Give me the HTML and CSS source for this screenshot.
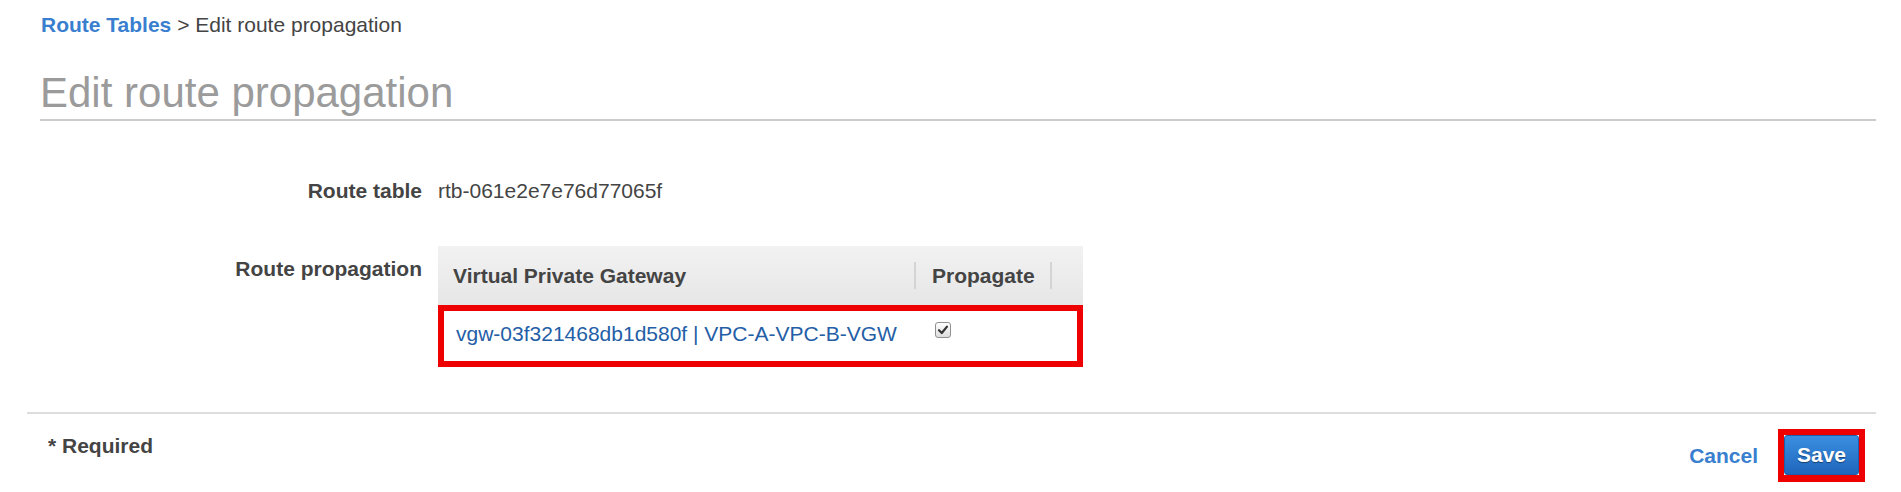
FILE: index.html
```html
<!DOCTYPE html>
<html lang="en">
<head>
<meta charset="utf-8">
<title>Edit route propagation</title>
<link rel="stylesheet" href="styles.css">
</head>
<body>
<div class="top">
  <div class="breadcrumb"><a class="crumb-link" href="#">Route Tables</a> &gt; Edit route propagation</div>
  <h1 class="title">Edit route propagation</h1>
</div>

<div class="form">
  <div class="label label-first">Route table</div>
  <div class="value value-first">rtb-061e2e7e76d77065f</div>

  <div class="label label-second">Route propagation</div>
  <div class="table">
    <div class="thead">
      <div class="th th-gw">Virtual Private Gateway</div>
      <div class="th th-prop">Propagate</div>
      <div class="th th-rest"></div>
    </div>
    <div class="trow">
      <div class="td td-gw"><a class="gw-link" href="#">vgw-03f321468db1d580f | VPC-A-VPC-B-VGW</a></div>
      <div class="td td-prop">
        <span class="checkbox">
          <svg width="12" height="12" viewBox="0 0 12 12"><path d="M2 6.2 L4.8 9 L10 2.6" fill="none" stroke="#333" stroke-width="2.2" stroke-linecap="round" stroke-linejoin="round"/></svg>
        </span>
      </div>
    </div>
  </div>
</div>

<div class="footer">
  <div class="required">* Required</div>
  <div class="actions">
    <a class="cancel" href="#">Cancel</a>
    <span class="highlight"><button class="save" type="button">Save</button></span>
  </div>
</div>
</body>
</html>
```

FILE: styles.css
```css
html, body {
  margin: 0;
  padding: 0;
  background: #fff;
}

body {
  font-family: "Liberation Sans", Arial, sans-serif;
  font-size: 21px;
  line-height: 24px;
  color: #444;
}

a {
  text-decoration: none;
}

.top {
  padding: 13px 25px 0 40px;
}

.breadcrumb {
  margin-left: 1px;
  color: #444;
}

.crumb-link {
  color: #3a7fcf;
  font-weight: bold;
}

.title {
  margin: 32px 0 0 0;
  padding: 0 0 2px 0;
  font-size: 42px;
  line-height: 48px;
  font-weight: normal;
  color: #9b9b9b;
  border-bottom: 2px solid #cccccc;
}

.form {
  display: grid;
  grid-template-columns: 422px auto;
  column-gap: 16px;
  row-gap: 43px;
  margin-top: 58px;
  align-items: start;
}

.label {
  text-align: right;
  font-weight: bold;
  color: #444;
}

.label-second {
  margin-top: 11px;
}

.value {
  color: #444;
}

.table {
  width: 645px;
}

.thead {
  display: flex;
  align-items: center;
  height: 59px;
  background: linear-gradient(#f2f2f2, #e6e6e6);
}

.th {
  font-weight: bold;
  color: #444;
  height: 27px;
  line-height: 27px;
  box-sizing: border-box;
}

.th-gw {
  width: 478px;
  padding-left: 15px;
  border-right: 2px solid #d4d4d4;
}

.th-prop {
  width: 136px;
  padding-left: 16px;
  border-right: 2px solid #d4d4d4;
}

.th-rest {
  flex: 1;
}

.trow {
  display: flex;
  align-items: flex-start;
  height: 50px;
  border: 6px solid #ee0000;
}

.td {
  box-sizing: border-box;
}

.td-gw {
  width: 472px;
  padding: 11px 0 0 12px;
}

.gw-link {
  color: #245ea6;
}

.td-prop {
  padding: 11px 0 0 19px;
}

.checkbox {
  display: flex;
  align-items: center;
  justify-content: center;
  width: 16px;
  height: 16px;
  box-sizing: border-box;
  border: 1px solid #8f8f8f;
  border-radius: 3px;
  background: linear-gradient(#ffffff, #dcdcdc);
}

.checkbox svg {
  display: block;
}

.footer {
  margin: 45px 25px 0 27px;
  border-top: 2px solid #dddddd;
  display: flex;
  justify-content: space-between;
  align-items: flex-start;
}

.required {
  margin: 20px 0 0 21px;
  font-weight: bold;
  color: #444;
}

.actions {
  display: flex;
  align-items: center;
  gap: 20px;
  margin: 15px 11px 0 0;
}

.cancel {
  color: #3a7fcf;
  font-weight: bold;
}

.highlight {
  display: block;
  border: 6px solid #ee0000;
  border-bottom-width: 7px;
}

.save {
  display: block;
  width: 75px;
  height: 40px;
  padding: 0;
  margin: 0;
  border: 1px solid #1d5ea9;
  border-radius: 3px;
  background: linear-gradient(#3a8fe0, #1f66bd);
  color: #fff;
  font-family: "Liberation Sans", Arial, sans-serif;
  font-size: 21px;
  font-weight: bold;
  text-shadow: 0 1px 1px rgba(0, 0, 0, 0.45);
  cursor: pointer;
}
```
